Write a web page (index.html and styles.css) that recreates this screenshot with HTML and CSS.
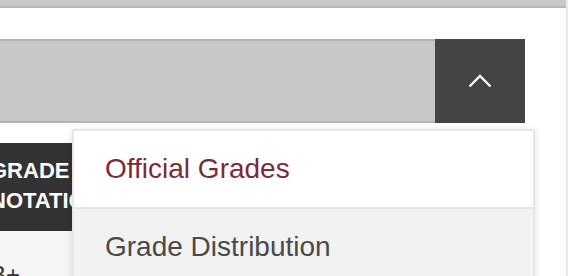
FILE: index.html
```html
<!DOCTYPE html>
<html lang="en">
  <head>
    <meta charset="UTF-8" />
    <meta name="viewport" content="width=device-width, initial-scale=1.0" />
    <title>Grades</title>
    <link rel="stylesheet" href="styles.css">
  </head>
  <body>
    <div class="page">
      <div class="topbar"></div>

      <div class="select-row">
        <div class="select-field"></div>
        <button class="select-toggle" aria-label="Close menu">
          <svg width="24" height="14" viewBox="0 0 24 14">
            <polyline points="1.5,12.5 12,2 22.5,12.5" fill="none" stroke="#fff" stroke-width="2.3" />
          </svg>
        </button>
      </div>

      <div class="table-wrap">
        <div class="grade-table">
          <div class="grade-head">GRADE NOTATION</div>
          <div class="grade-cell">B+</div>
        </div>
      </div>

      <!-- open menu of the select -->
      <ul class="dropdown">
        <li class="dropdown-item active">Official Grades</li>
        <li class="dropdown-item">Grade Distribution</li>
        <li class="dropdown-item">Course Evaluations</li>
      </ul>
    </div>
  </body>
</html>
```

FILE: styles.css
```css
body {
  margin: 0;
  height: 276px;
  overflow: hidden;
  background: #fff;
  font-family: "Liberation Sans", Arial, sans-serif;
}

.page {
  position: relative;
  width: 566px;
  height: 276px;
  border-right: 2px solid #e8e8e8;
  overflow: hidden;
}

.topbar {
  height: 6px;
  background: #c8c8c8;
  border-bottom: 2px solid #b6b6b6;
}

.select-row {
  display: flex;
  height: 84px;
  margin: 31px 41px 0 0;
}

.select-field {
  flex: 1;
  background: #c8c8c8;
  border-top: 2px solid #b3b3b3;
  border-bottom: 2px solid #b3b3b3;
}

.select-toggle {
  width: 90px;
  border: none;
  padding: 0;
  background: #444;
  display: flex;
  align-items: center;
  justify-content: center;
  cursor: pointer;
}

.table-wrap {
  margin-top: 20px;
  overflow: hidden;
}

.grade-table {
  width: 300px;
  margin-left: -20px;
}

.grade-head {
  width: 125px;
  padding: 13px 14px 15px 10px;
  background: #333;
  color: #fff;
  font-size: 22px;
  font-weight: bold;
  line-height: 30px;
}

.grade-cell {
  padding: 30px 10px 0;
  background: #f6f6f6;
  color: #333;
  font-size: 24px;
  height: 60px;
}

.dropdown {
  position: absolute;
  top: 129px;
  left: 72px;
  width: 459px;
  margin: 0;
  padding: 0;
  list-style: none;
  background: #f2f2f2;
  border: 2px solid #e6e6e6;
  box-shadow: 0 2px 8px rgba(0, 0, 0, 0.12);
}

.dropdown-item {
  height: 76px;
  line-height: 76px;
  padding-left: 31px;
  font-size: 28px;
  color: #4a4a4a;
  border-top: 2px solid #e6e6e6;
}

.dropdown-item:first-child {
  border-top: none;
}

.dropdown-item.active {
  background: #fff;
  color: #7d2a3b;
}
```
